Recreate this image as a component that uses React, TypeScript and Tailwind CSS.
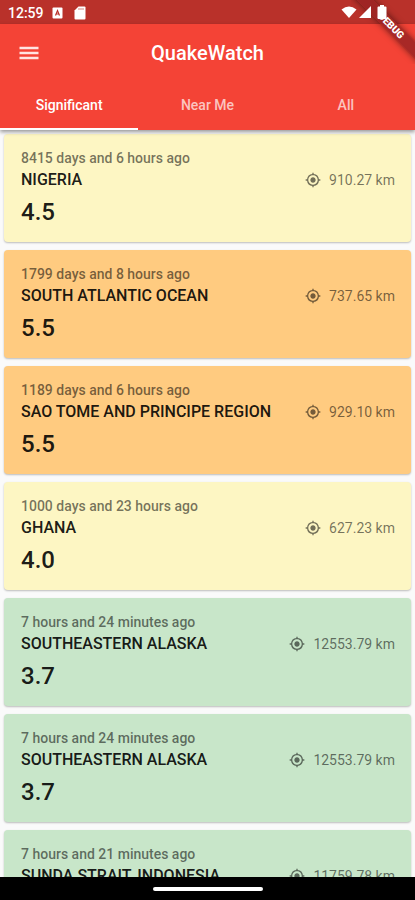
import { MdGpsFixed } from "react-icons/md";
import clsx from "clsx";

type Quake = {
  time: string;
  place: string;
  magnitude: string;
  distance: string;
};

const TABS = ["Significant", "Near Me", "All"];

const QUAKES: Quake[] = [
  { time: "8415 days and 6 hours ago", place: "NIGERIA", magnitude: "4.5", distance: "910.27 km" },
  { time: "1799 days and 8 hours ago", place: "SOUTH ATLANTIC OCEAN", magnitude: "5.5", distance: "737.65 km" },
  { time: "1189 days and 6 hours ago", place: "SAO TOME AND PRINCIPE REGION", magnitude: "5.5", distance: "929.10 km" },
  { time: "1000 days and 23 hours ago", place: "GHANA", magnitude: "4.0", distance: "627.23 km" },
  { time: "7 hours and 24 minutes ago", place: "SOUTHEASTERN ALASKA", magnitude: "3.7", distance: "12553.79 km" },
  { time: "7 hours and 24 minutes ago", place: "SOUTHEASTERN ALASKA", magnitude: "3.7", distance: "12553.79 km" },
  { time: "7 hours and 21 minutes ago", place: "SUNDA STRAIT, INDONESIA", magnitude: "3.5", distance: "11759.78 km" },
];

function cardColor(magnitude: string) {
  const value = Number(magnitude);
  if (value >= 5) return "bg-[#ffcb80]";
  if (value >= 4) return "bg-[#fdf6c3]";
  return "bg-[#c8e6c9]";
}

function StatusBar() {
  return (
    <div className="flex h-6 shrink-0 items-center justify-between bg-[#b9312a] pr-7 pl-2 text-white">
      <div className="flex items-center pt-0.5">
        <span className="text-sm font-medium">12:59</span>
        <svg className="ml-2 size-3" viewBox="0 0 12 12" aria-hidden="true">
          <rect x="0.500" y="0.500" width="10" height="11" rx="1" fill="#fff" />
          <path d="M3.5 8.500L5.500 3.500L7.500 8.500M4.300 7H6.700" fill="none" stroke="#b9312a" strokeWidth="1.200" />
        </svg>
        <svg className="ml-2.5 h-3.5 w-3" viewBox="0 0 12 14" aria-hidden="true">
          <path d="M4.500 0.500H10.500Q11.500 0.500 11.500 1.500V12.500Q11.500 13.500 10.500 13.500H1.500Q0.500 13.500 0.500 12.500V4.500Z" fill="#fff" />
          <path d="M5 2V4M7 2V4M9 2V4" stroke="#b9312a" strokeWidth="0.600" />
        </svg>
      </div>
      <div className="z-20 flex items-center gap-0.5">
        <svg className="h-3 w-4" viewBox="0 0 16 12" aria-hidden="true">
          <path d="M0.500 3.500Q8 -2.500 15.500 3.500L8 12Z" fill="#fff" />
        </svg>
        <svg className="size-3" viewBox="0 0 12 12" aria-hidden="true">
          <path d="M12 0V12H0Z" fill="#fff" />
        </svg>
        <svg className="ml-1 h-3.5 w-2.5" viewBox="0 0 10 14" aria-hidden="true">
          <path d="M3 0H7V1.500H8.500Q9.500 1.500 9.500 2.500V13Q9.500 14 8.500 14H1.500Q0.500 14 0.500 13V2.500Q0.500 1.500 1.500 1.500H3Z" fill="#fff" />
        </svg>
      </div>
    </div>
  );
}

function DebugBanner() {
  return (
    <div className="pointer-events-none absolute top-0 right-0 z-10 size-16 overflow-hidden">
      <div className="absolute top-5 -right-6 w-24 rotate-45 bg-[#9a2323]/85 text-center text-[10px] leading-3 font-black text-white shadow-[0_0_6px_rgba(0,0,0,0.5)]">
        DEBUG
      </div>
    </div>
  );
}

function Header() {
  return (
    <header className="z-[5] shrink-0 bg-[#f44336] text-white shadow-[0_2px_4px_rgba(0,0,0,0.4)]">
      <div className="grid h-[58px] grid-cols-[1fr_auto_1fr] items-center px-[19px]">
        <button type="button" aria-label="Open menu" className="w-fit">
          <svg className="h-3.5 w-5" viewBox="0 0 20 14" aria-hidden="true">
            <path d="M0.500 2H19.500M0.500 7H19.500M0.500 12H19.500" stroke="#ffe4e2" strokeWidth="2.500" />
          </svg>
        </button>
        <h1 className="text-xl font-medium">QuakeWatch</h1>
      </div>
      <nav role="tablist" className="grid grid-cols-3">
        {TABS.map((tab, i) => (
          <button
            key={tab}
            type="button"
            role="tab"
            aria-selected={i === 0}
            className={clsx(
              "h-12 border-b-2 text-sm font-medium",
              i === 0 ? "border-white text-white" : "border-transparent text-white/70"
            )}
          >
            {tab}
          </button>
        ))}
      </nav>
    </header>
  );
}

function QuakeCard({ quake }: { quake: Quake }) {
  return (
    <li
      className={clsx(
        "rounded-sm pt-4 pr-4 pb-3.5 pl-[17px] shadow-[0_1px_2px_rgba(0,0,0,0.25)]",
        cardColor(quake.magnitude)
      )}
    >
      <p className="text-sm leading-4 font-medium text-black/55">{quake.time}</p>
      <div className="flex items-center justify-between">
        <h2 className="text-base leading-7 font-medium text-black/90">{quake.place}</h2>
        <span className="flex items-center gap-2 text-sm text-black/55">
          <MdGpsFixed className="size-4" />
          {quake.distance}
        </span>
      </div>
      <p className="mt-0.5 text-2xl leading-8 font-medium text-black/90">{quake.magnitude}</p>
    </li>
  );
}

export default function App() {
  return (
    <div className="relative flex h-dvh flex-col overflow-hidden bg-[#fafafa] font-[Roboto,sans-serif]">
      <StatusBar />
      <DebugBanner />
      <Header />
      <main className="min-h-0 flex-1 overflow-y-auto [scrollbar-width:none]">
        <ul className="flex flex-col gap-2 px-1 pt-1 pb-2">
          {QUAKES.map((quake, i) => (
            <QuakeCard key={i} quake={quake} />
          ))}
        </ul>
      </main>
      <footer className="flex h-[23px] shrink-0 items-center justify-center bg-black">
        <span className="h-1 w-[110px] rounded-full bg-white" />
      </footer>
    </div>
  );
}
